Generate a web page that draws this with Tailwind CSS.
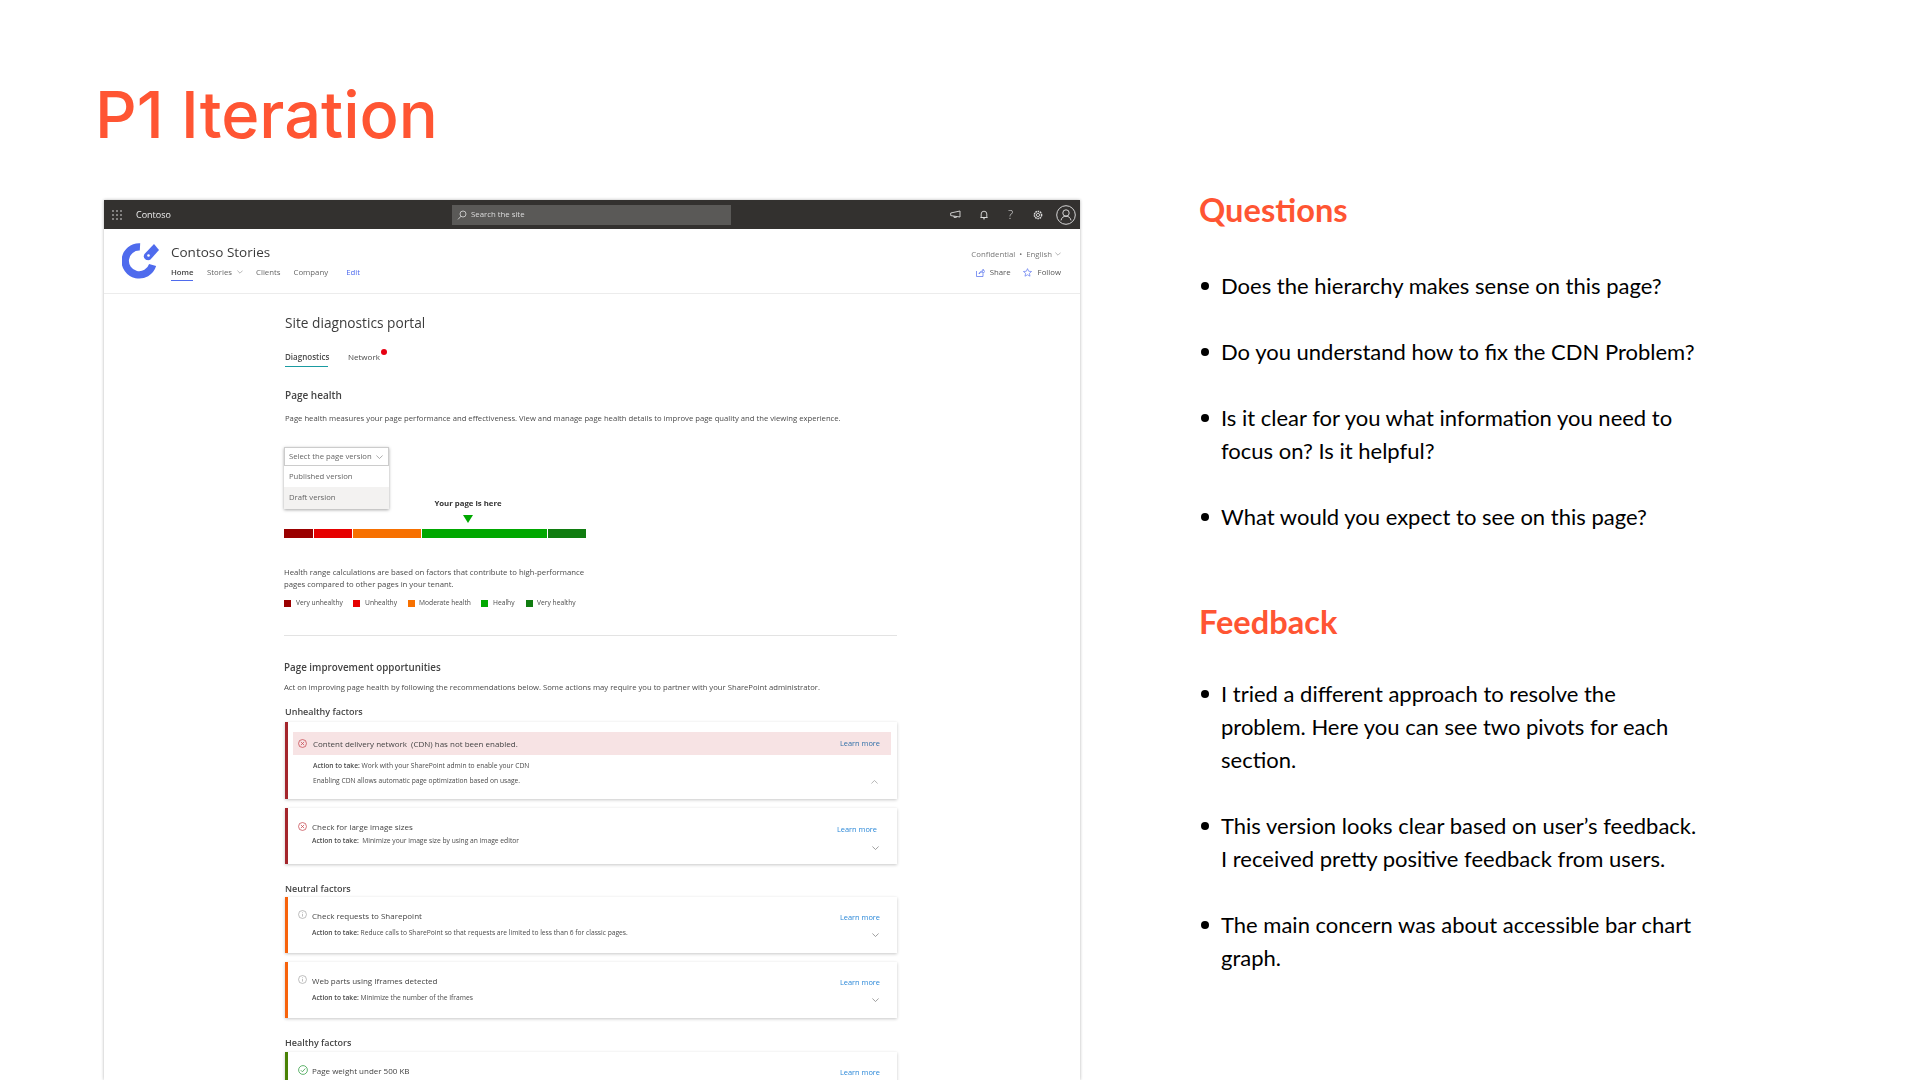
<!DOCTYPE html>
<html><head><meta charset="utf-8"><script src="https://cdn.jsdelivr.net/npm/@tailwindcss/browser@4"></script></head>
<body class="bg-white">
<div class="w-[1920px] h-[1080px] overflow-hidden bg-white flex flex-col">
  <div class="h-[190px] shrink-0 pl-[95px] pt-[76px]"><h1 class="font-['Inter',sans-serif] font-medium text-[65px] leading-[78px] text-[#ff5533]">P1 Iteration</h1></div>
  <div class="flex flex-1 min-h-0">
    <!-- embedded screenshot -->
    <div class="ml-[104px] mt-[10px] w-[976px] h-[880px] shrink-0 overflow-hidden bg-white shadow-[0_0_3px_rgba(0,0,0,0.3)] font-['Open_Sans',sans-serif] text-[#4a4a4a] blur-[0.35px]">
      <div class="h-[29px] bg-[#33312f] flex items-center text-white relative">
        <svg class="ml-[8px] w-[10px] h-[10px]" viewBox="0 0 10 10" fill="#e8e8e8"><circle cx="1" cy="1" r=".8"/><circle cx="5" cy="1" r=".8"/><circle cx="9" cy="1" r=".8"/><circle cx="1" cy="5" r=".8"/><circle cx="5" cy="5" r=".8"/><circle cx="9" cy="5" r=".8"/><circle cx="1" cy="9" r=".8"/><circle cx="5" cy="9" r=".8"/><circle cx="9" cy="9" r=".8"/></svg>
        <span class="ml-[14px] text-[9px] w-[316px] text-[#eee]">Contoso</span>
        <div class="w-[279px] h-[20px] bg-[#5a5957] flex items-center pl-[5px] gap-[4px] text-[7.800px] text-[#ddd]">
          <svg class="w-[10px] h-[10px]" viewBox="0 0 10 10" fill="none" stroke="#ddd" stroke-width=".8"><circle cx="6" cy="4" r="3"/><path d="M4 6.200 1 9.400"/></svg><span>Search the site</span>
        </div>
        <div class="ml-auto flex items-center text-[#ddd] mr-[4px]">
          <svg class="w-[11px] h-[9px]" viewBox="0 0 11 9" fill="none" stroke="#ddd" stroke-width=".9"><path d="M.7 3 10 1v6L.7 5.600ZM4 6v1.400h2.400V6.600"/></svg>
          <svg class="ml-[19px] w-[8px] h-[10px]" viewBox="0 0 8 10" fill="none" stroke="#ddd" stroke-width=".9"><path d="M1.200 7.500V4a2.800 2.800 0 0 1 5.600 0v3.500ZM.4 7.500h7.200M3 8.800h2"/></svg>
          <span class="ml-[20px] text-[12px] leading-none font-light w-[7px]">?</span>
          <svg class="ml-[18px] w-[10px] h-[10px]" viewBox="0 0 10 10" fill="none" stroke="#ddd" stroke-width=".9"><circle cx="5" cy="5" r="1.600"/><circle cx="5" cy="5" r="3.600" stroke-dasharray="1.600 .7" stroke-width="1.500"/></svg>
          <svg class="ml-[13px] w-[20px] h-[20px]" viewBox="0 0 20 20" fill="none" stroke="#e8e8e8" stroke-width=".9"><circle cx="10" cy="10" r="9.300"/><circle cx="10" cy="8" r="3.200"/><path d="M5 15.400c.6-2.800 2.400-4.200 5-4.200s4.400 1.400 5 4.200"/></svg>
        </div>
      </div>
      <div class="h-[65px] border-b border-[#ececec] flex relative">
        <svg class="absolute left-[18px] top-[14px] w-[37px] h-[36px]" viewBox="0 0 37 36" fill="none"><path d="M18 3.900A14 14 0 1 0 30.600 22" stroke="#4f6bed" stroke-width="7.400"/><path d="M32 1l5 6-8.500 9.500c-1.500 1-4 1-5.500-.5-1.500-1.500-1.500-3.500-.5-5Z" fill="#4f6bed"/><circle cx="26.500" cy="12.500" r="1.300" fill="#fff"/></svg>
        <div class="ml-[67px] pt-[14px]">
          <div class="text-[13.500px] leading-[18px] text-[#3a3a3a]">Contoso Stories</div>
          <div class="flex items-start text-[7.800px] leading-[12px] mt-[5px] text-[#666]">
            <span class="w-[22px] pb-[2px] border-b border-[#4f6bed] font-semibold text-[#444] h-[15px] whitespace-nowrap">Home</span>
            <span class="ml-[14px]">Stories</span>
            <svg class="ml-[5px] mt-[4px] w-[6px] h-[4px]" viewBox="0 0 6 4" fill="none" stroke="#888" stroke-width=".6"><path d="m.4.600 2.600 2.600L5.600.600"/></svg>
            <span class="ml-[13px]">Clients</span><span class="ml-[13px]">Company</span><span class="ml-[18px] text-[#4f6bed]">Edit</span>
          </div>
        </div>
        <div class="ml-auto mr-[19px] pt-[19px] flex flex-col items-end text-[7.800px] leading-[12px] text-[#777]">
          <div class="flex items-center">Confidential<span class="mx-[4px]">•</span>English<svg class="ml-[3px] w-[6px] h-[4px]" viewBox="0 0 6 4" fill="none" stroke="#888" stroke-width=".6"><path d="m.4.600 2.600 2.600L5.600.600"/></svg></div>
          <div class="flex items-center mt-[6px] text-[#555]">
            <svg class="w-[9px] h-[9px]" viewBox="0 0 9 9" fill="none" stroke="#4f6bed" stroke-width=".7"><path d="M.5 3v5.500h6.500V6M3 6c.4-2 1.800-3 4-3V1.200L8.700 3.500 7 5.500V4C5.200 4 4 4.600 3 6Z"/></svg>
            <span class="ml-[5px]">Share</span>
            <svg class="ml-[12px] w-[9px] h-[9px]" viewBox="0 0 10 10" fill="none" stroke="#4f6bed" stroke-width=".7"><path d="m5 .7 1.300 2.900 3.200.3-2.400 2.100.7 3.100L5 7.500 2.200 9.100l.7-3.100L.5 3.900l3.200-.3Z"/></svg>
            <span class="ml-[6px]">Follow</span>
          </div>
        </div>
      </div>
      <div class="pl-[181px] w-[793px]">
        <div class="mt-[21px] h-[16px] text-[13.700px] leading-[16px] font-medium text-[#3c3c3c] whitespace-nowrap">Site diagnostics portal</div>
        <div class="mt-[16px] h-[20px] flex items-start text-[8px] leading-[19px]">
          <span class="w-[43px] h-[20px] border-b border-[#1a9ba1] font-semibold whitespace-nowrap">Diagnostics</span>
          <span class="ml-[20px] relative">Network<span class="absolute -right-[7px] top-[2px] w-[6px] h-[6px] rounded-full bg-[#e60012]"></span></span>
        </div>
        <div class="mt-[22px] h-[12px] text-[10px] leading-[12px] font-semibold text-[#444]">Page health</div>
        <div class="mt-[11px] h-[12px] text-[7.700px] leading-[12px] whitespace-nowrap">Page health measures your page performance and effectiveness. View and manage page health details to improve page quality and the viewing experience.</div>
        <div class="relative mt-[23px] pt-[50px] -ml-px">
          <div class="absolute left-0 top-0 w-[105px] h-[62px] bg-white shadow-[0_1px_3px_rgba(0,0,0,0.35)] text-[7.700px] text-[#666]">
            <div class="h-[19px] border border-[#ccc] flex items-center justify-between pl-[4px] pr-[5px]"><span>Select the page version</span><svg class="w-[7px] h-[4px]" viewBox="0 0 7 4" fill="none" stroke="#777" stroke-width=".6"><path d="m.4.500 3.100 3 3.100-3"/></svg></div>
            <div class="h-[21px] flex items-center pl-[5px]">Published version</div>
            <div class="h-[22px] flex items-center pl-[5px] pb-[1px] bg-[#f3f2f1]">Draft version</div>
          </div>
          <div class="w-[66px] ml-[151px] flex flex-col items-center">
            <span class="text-[7.800px] leading-[12px] font-bold whitespace-nowrap text-[#333]">Your page is here</span>
            <svg class="mt-[6px] w-[10px] h-[8px]" viewBox="0 0 10 8"><path d="M0 0h10L5 8Z" fill="#00a800"/></svg>
          </div>
          <div class="mt-[6px] w-[302px] h-[9px] flex gap-[1px]">
            <div class="w-[29px] bg-[#9a0000]"></div><div class="w-[38px] bg-[#e60000]"></div><div class="w-[68px] bg-[#f77000]"></div><div class="w-[125px] bg-[#00a800]"></div><div class="w-[38px] bg-[#107c10]"></div>
          </div>
        </div>
        <div class="-ml-px mt-[28px] text-[7.750px] leading-[12px] whitespace-nowrap">Health range calculations are based on factors that contribute to high-performance<br>pages compared to other pages in your tenant.</div>
        <div class="-ml-px mt-[7px] h-[12px] flex items-center text-[6.700px] whitespace-nowrap">
          <span class="w-[7px] h-[7px] bg-[#9a0000]"></span><span class="ml-[5px] w-[57px]">Very unhealthy</span>
          <span class="w-[7px] h-[7px] bg-[#e60000]"></span><span class="ml-[5px] w-[43px]">Unhealthy</span>
          <span class="w-[7px] h-[7px] bg-[#f77000]"></span><span class="ml-[4px] w-[62px]">Moderate health</span>
          <span class="w-[7px] h-[7px] bg-[#00a800]"></span><span class="ml-[5px] w-[33px]">Healhy</span>
          <span class="w-[7px] h-[7px] bg-[#107c10]"></span><span class="ml-[4px]">Very healthy</span>
        </div>
        <div class="-ml-px mt-[26px] border-t border-[#e3e3e3]"></div>
        <div class="-ml-px mt-[26px] h-[12px] text-[9.800px] leading-[12px] font-semibold text-[#444] whitespace-nowrap">Page improvement opportunities</div>
        <div class="-ml-px mt-[7px] h-[12px] text-[7.700px] leading-[12px] whitespace-nowrap">Act on improving page health by following the recommendations below. Some actions may require you to partner with your SharePoint administrator.</div>
        <div class="mt-[13px] h-[12px] text-[9px] leading-[12px] font-semibold text-[#444]">Unhealthy factors</div>
        <!-- card 1 -->
        <div class="mt-[4px] h-[77px] border-l-[3px] border-[#a4262c] shadow-[0_1px_3px_rgba(0,0,0,0.22)] pt-[10px] pl-[5px] pr-[6px] text-[6.700px]">
          <div class="h-[23px] bg-[#f7e3e4] flex items-center pl-[5px] pr-[11px]">
            <svg class="w-[9px] h-[9px]" viewBox="0 0 10 10" fill="none" stroke="#c4414a" stroke-width=".8"><circle cx="5" cy="5" r="4.400"/><path d="m3.200 3.200 3.600 3.600m0-3.600L3.200 6.800"/></svg>
            <span class="ml-[6px] text-[8px] font-medium text-[#444]">Content delivery network&nbsp; (CDN) has not been enabled.</span>
            <span class="ml-auto text-[7.400px] text-[#2f6fa8]">Learn more</span>
          </div>
          <div class="flex">
            <div class="pl-[20px] pt-[5px] leading-[12px]">
              <div><b class="font-semibold">Action to take:</b> Work with your SharePoint admin to enable your CDN</div>
              <div class="mt-[3px]">Enabling CDN allows automatic page optimization based on usage.</div>
            </div>
            <svg class="ml-auto mr-[13px] mt-[25px] w-[7px] h-[4px]" viewBox="0 0 7 4" fill="none" stroke="#999" stroke-width=".7"><path d="m.4 3.500 3.100-3 3.100 3"/></svg>
          </div>
        </div>
        <!-- card 2 -->
        <div class="mt-[9px] h-[56px] border-l-[3px] border-[#a4262c] shadow-[0_1px_3px_rgba(0,0,0,0.22)] flex pl-[10px] pr-[18px] pt-[13px] text-[6.700px]">
          <svg class="mt-[1px] w-[9px] h-[9px] shrink-0" viewBox="0 0 10 10" fill="none" stroke="#c4414a" stroke-width=".8"><circle cx="5" cy="5" r="4.400"/><path d="m3.200 3.200 3.600 3.600m0-3.600L3.200 6.800"/></svg>
          <div class="ml-[5px]">
            <div class="text-[8px] leading-[12px] font-medium text-[#444]">Check for large image sizes</div>
            <div class="mt-[2px] leading-[12px]"><b class="font-semibold">Action to take:</b>&nbsp; Minimize your image size by using an image editor</div>
          </div>
          <div class="ml-auto flex flex-col items-end">
            <span class="text-[7.400px] leading-[12px] mt-[2px] mr-[2px] text-[#2b88d8]">Learn more</span>
            <svg class="mt-[11px] w-[7px] h-[4px]" viewBox="0 0 7 4" fill="none" stroke="#777" stroke-width=".7"><path d="m.4.500 3.100 3 3.100-3"/></svg>
          </div>
        </div>
        <div class="mt-[19px] h-[12px] text-[9px] leading-[12px] font-semibold text-[#444]">Neutral factors</div>
        <!-- card 3 -->
        <div class="mt-[2px] h-[56px] border-l-[3px] border-[#f7630c] shadow-[0_1px_3px_rgba(0,0,0,0.22)] flex pl-[10px] pr-[17px] pt-[13px] text-[6.700px]">
          <svg class="w-[9px] h-[9px] shrink-0" viewBox="0 0 10 10" fill="none" stroke="#999" stroke-width=".7"><circle cx="5" cy="5" r="4.400"/><path d="M5 4.300v3M5 2.600v.8"/></svg>
          <div class="ml-[5px]">
            <div class="text-[8px] leading-[12px] font-medium text-[#444]">Check requests to Sharepoint</div>
            <div class="mt-[5px] leading-[12px]"><b class="font-semibold">Action to take:</b> Reduce calls to SharePoint so that requests are limited to less than 6 for classic pages.</div>
          </div>
          <div class="ml-auto flex flex-col items-end">
            <span class="text-[7.400px] leading-[12px] mt-[1px] text-[#2b88d8]">Learn more</span>
            <svg class="mt-[10px] mr-[1px] w-[7px] h-[4px]" viewBox="0 0 7 4" fill="none" stroke="#777" stroke-width=".7"><path d="m.4.500 3.100 3 3.100-3"/></svg>
          </div>
        </div>
        <!-- card 4 -->
        <div class="mt-[9px] h-[56px] border-l-[3px] border-[#f7630c] shadow-[0_1px_3px_rgba(0,0,0,0.22)] flex pl-[10px] pr-[17px] pt-[13px] text-[6.700px]">
          <svg class="w-[9px] h-[9px] shrink-0" viewBox="0 0 10 10" fill="none" stroke="#999" stroke-width=".7"><circle cx="5" cy="5" r="4.400"/><path d="M5 4.300v3M5 2.600v.8"/></svg>
          <div class="ml-[5px]">
            <div class="text-[8px] leading-[12px] font-medium text-[#444]">Web parts using Iframes detected</div>
            <div class="mt-[5px] leading-[12px]"><b class="font-semibold">Action to take:</b> Minimize the number of the Iframes</div>
          </div>
          <div class="ml-auto flex flex-col items-end">
            <span class="text-[7.400px] leading-[12px] mt-[1px] text-[#2b88d8]">Learn more</span>
            <svg class="mt-[10px] mr-[1px] w-[7px] h-[4px]" viewBox="0 0 7 4" fill="none" stroke="#777" stroke-width=".7"><path d="m.4.500 3.100 3 3.100-3"/></svg>
          </div>
        </div>
        <div class="mt-[19px] h-[12px] text-[9px] leading-[12px] font-semibold text-[#444]">Healthy factors</div>
        <!-- card 5 -->
        <div class="mt-[3px] h-[56px] border-l-[3px] border-[#498205] shadow-[0_1px_3px_rgba(0,0,0,0.22)] flex pl-[10px] pr-[17px] pt-[13px] text-[6.700px]">
          <svg class="w-[10px] h-[10px] shrink-0" viewBox="0 0 10 10" fill="none" stroke="#3aa14a" stroke-width=".8"><circle cx="5" cy="5" r="4.400"/><path d="m2.800 5.200 1.600 1.600 2.900-3.300"/></svg>
          <div class="ml-[4px] text-[8px] leading-[12px] font-medium text-[#444]">Page weight under 500 KB</div>
          <span class="ml-auto text-[7.400px] leading-[12px] mt-[1px] text-[#2b88d8]">Learn more</span>
        </div>
      </div>
    </div>
    <!-- notes -->
    <div class="ml-[119px] w-[520px] font-['Lato',sans-serif] text-black">
      <h2 class="text-[32.600px] leading-[40px] font-bold text-[#ff5533]">Questions</h2>
      <ul class="mt-[39px] pl-[22px] text-[22px] leading-[33px] flex flex-col gap-[33px]">
        <li class="relative before:absolute before:-left-[20px] before:top-[13px] before:w-[8px] before:h-[8px] before:rounded-full before:bg-black">Does the hierarchy makes sense on this page?</li>
        <li class="relative before:absolute before:-left-[20px] before:top-[13px] before:w-[8px] before:h-[8px] before:rounded-full before:bg-black">Do you understand how to fix the CDN Problem?</li>
        <li class="relative before:absolute before:-left-[20px] before:top-[13px] before:w-[8px] before:h-[8px] before:rounded-full before:bg-black">Is it clear for you what information you need to<br>focus on? Is it helpful?</li>
        <li class="relative before:absolute before:-left-[20px] before:top-[13px] before:w-[8px] before:h-[8px] before:rounded-full before:bg-black">What would you expect to see on this page?</li>
      </ul>
      <h2 class="mt-[69px] text-[32.600px] leading-[40px] font-bold text-[#ff5533]">Feedback</h2>
      <ul class="mt-[35px] pl-[22px] text-[22px] leading-[33px] flex flex-col gap-[33px]">
        <li class="relative before:absolute before:-left-[20px] before:top-[13px] before:w-[8px] before:h-[8px] before:rounded-full before:bg-black">I tried a different approach to resolve the<br>problem. Here you can see two pivots for each<br>section.</li>
        <li class="relative before:absolute before:-left-[20px] before:top-[13px] before:w-[8px] before:h-[8px] before:rounded-full before:bg-black">This version looks clear based on user’s feedback.<br>I received pretty positive feedback from users.</li>
        <li class="relative before:absolute before:-left-[20px] before:top-[13px] before:w-[8px] before:h-[8px] before:rounded-full before:bg-black">The main concern was about accessible bar chart<br>graph.</li>
      </ul>
    </div>
  </div>
</div>
</body></html>
